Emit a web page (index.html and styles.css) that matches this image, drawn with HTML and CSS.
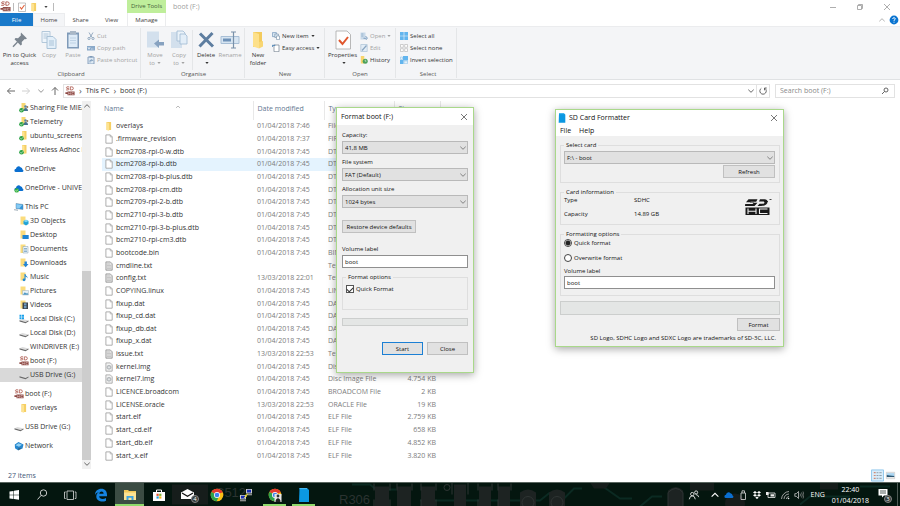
FILE: index.html
```html
<!DOCTYPE html>
<html lang="en">
<head>
<meta charset="utf-8">
<title>boot (F:)</title>
<link rel="stylesheet" href="styles.css">
</head>
<body>
<svg class="sprite" aria-hidden="true">
  <symbol id="doc" viewBox="0 0 8 10"><path d="M.9.9h4.4l1.9 1.9v6.4H.9z" fill="#fff" stroke="#9a9a9a" stroke-width=".8"/><path d="M5.2.9v2h2" fill="none" stroke="#9a9a9a" stroke-width=".6"/></symbol>
  <symbol id="txt" viewBox="0 0 8 10"><path d="M.9.9h4.4l1.9 1.9v6.4H.9z" fill="#e2e2e2" stroke="#909090" stroke-width=".8"/><path d="M2 3h3M2 4.5h4M2 6h4M2 7.5h4" stroke="#aaa" stroke-width=".5"/></symbol>
  <symbol id="img" viewBox="0 0 8 10"><path d="M.9.9h4.4l1.9 1.9v6.4H.9z" fill="#f4f4f4" stroke="#a0a0a0" stroke-width=".8"/><circle cx="4" cy="5.3" r="2" fill="#c9cdd0" stroke="#8f9498" stroke-width=".5"/><circle cx="4" cy="5.3" r=".6" fill="#fff"/></symbol>
  <symbol id="folder" viewBox="0 0 8 10"><path d="M1.5 1h4.6v8H1.5z" fill="#f6cf63"/><path d="M1.5 1.3l2.6 1v7.4L1.5 9z" fill="#fde392"/></symbol>
  <symbol id="bigfolder" viewBox="0 0 14 20"><path d="M2 2h9v15H2z" fill="#f3cb5d"/><path d="M2 2l6 2v14.500l-6-2z" fill="#fde08a"/><path d="M8 12l4-1v5.500l-4 2z" fill="#f8d673"/></symbol>
  <symbol id="shared" viewBox="0 0 10 10"><path d="M2.500 0h4v8h-4z" fill="#f8d873"/><circle cx="6.500" cy="3.500" r="1.300" fill="#5c88a8"/><path d="M4.500 8c0-4 4.500-4 4.500 0z" fill="#46718f"/><circle cx="8.300" cy="4" r="1" fill="#9a7b58"/><circle cx="2.500" cy="7.300" r="2.300" fill="#2ba245"/><path d="M1.300 7.300l.9 1 1.600-1.900" fill="none" stroke="#fff" stroke-width=".6"/></symbol>
  <symbol id="synced" viewBox="0 0 10 10"><path d="M3 0h4.500v8.500H3z" fill="#f5cf63"/><path d="M3 0l2.500 1v8L3 8z" fill="#fde392"/><circle cx="2.500" cy="7.300" r="2.300" fill="#2ba245"/><path d="M1.300 7.300l.9 1 1.600-1.900" fill="none" stroke="#fff" stroke-width=".6"/></symbol>
  <symbol id="cloud" viewBox="0 0 10 10"><path d="M2 8a1.600 1.600 0 0 1 0-3.200A2.500 2.500 0 0 1 6.500 3.300 2.300 2.300 0 0 1 8.500 5.500 1.300 1.300 0 0 1 8.500 8z" fill="#0a6fd0"/></symbol>
  <symbol id="cloudok" viewBox="0 0 10 10"><use href="#cloud"/><circle cx="2.700" cy="7.400" r="2.200" fill="#36b13f"/><path d="M1.600 7.400l.8.9 1.500-1.700" fill="none" stroke="#fff" stroke-width=".6"/></symbol>
  <symbol id="pc" viewBox="0 0 10 10"><path d="M2 1.500l7 1v5l-7-1z" fill="#2f95dc" stroke="#6e8ea3" stroke-width=".5"/><path d="M2.300 2l6 .9-3 3.500-3-.4z" fill="#86caf3"/><path d="M0 7l4 .6v1.400L0 8.300z" fill="#b6c0c8"/></symbol>
  <symbol id="f3d" viewBox="0 0 10 10"><path d="M1.500.5h5v8h-5z" fill="#fbdc7d"/><path d="M4.500 5l2.500-1.300L9.500 5v3L7 9.500 4.500 8z" fill="#1fa3d8"/><path d="M4.500 5L7 6.300 9.500 5 7 3.700z" fill="#7fd6f3"/></symbol>
  <symbol id="fdesk" viewBox="0 0 10 10"><path d="M1.500.5h5v8h-5z" fill="#fbdc7d"/><path d="M3.500 5h6.200v4H3.500z" fill="#1d84d4"/></symbol>
  <symbol id="fdoc" viewBox="0 0 10 10"><path d="M1.500.5h5v8.500h-5z" fill="#fbdc7d"/><path d="M4 2.500h5v6.500H4z" fill="#eef4f8" stroke="#7d9db3" stroke-width=".5"/><path d="M5 4.500h3M5 6h3M5 7.500h3" stroke="#4b87b0" stroke-width=".6"/></symbol>
  <symbol id="fdown" viewBox="0 0 10 10"><path d="M1.500.5h5v8h-5z" fill="#fbdc7d"/><path d="M5.500 3.500h2.400V6h1.600L6.700 9.300 4 6h1.500z" fill="#2384d6"/></symbol>
  <symbol id="fmusic" viewBox="0 0 10 10"><path d="M1.500.5h5v8h-5z" fill="#fbdc7d"/><path d="M6 2v5.500" stroke="#1b87d8" stroke-width="1"/><path d="M6 2c.5 2 3 2 2.500 4.500C8 5 7 4.500 6 4.500z" fill="#1b87d8"/><circle cx="5" cy="7.800" r="1.400" fill="#1b87d8"/></symbol>
  <symbol id="fpic" viewBox="0 0 10 10"><path d="M1.500.5h5v8h-5z" fill="#fbdc7d"/><path d="M3.500 4.500h6V9h-6z" fill="#e8f2f8" stroke="#8ea4b1" stroke-width=".4"/><path d="M3.800 8.700l2-2.500 1.500 1.300 1-.8 1 2z" fill="#4e97c2"/></symbol>
  <symbol id="fvid" viewBox="0 0 10 10"><path d="M1.500.5h5v8h-5z" fill="#fbdc7d"/><path d="M3.500 2.500h5.500V9H3.500z" fill="#3b434b"/><path d="M5 3.200h2.500v2.200H5zM5 6h2.500v2.300H5z" fill="#6f9cc0"/></symbol>
  <symbol id="disk" viewBox="0 0 10 10"><path d="M.5 6.300l3-1.300 6 1.500-3 1.500z" fill="#dcdcdc"/><path d="M.5 6.300l6 1.700v1.300L.5 7.500zM6.500 8l3-1.500v1.100l-3 1.700z" fill="#6a6a6a"/></symbol>
  <symbol id="diskwin" viewBox="0 0 10 10"><use href="#disk"/><path d="M.5.8h2v2h-2zM3 .8h2v2H3zM.5 3.200h2v2h-2zM3 3.200h2v2H3z" fill="#18a0ea"/></symbol>
  <symbol id="sd" viewBox="0 0 12 12"><path d="M5 1H2.300L1.700 2l.5.900h2.100l.4.900-.6.900H1.300M6.400 1v3.700h1.800Q10 4.500 10 2.800 10 1 8.200 1z" fill="none" stroke="#a5483c" stroke-width=".9"/><path d="M.5 7.500h2.500v-1h8.500v4.700H3V9.500H.5z" fill="#8e4a45"/><path d="M4.300 7.500v3M6.500 7.500v3M4.300 9h2.200M10.500 7.800H8.300v2.400h2.200" fill="none" stroke="#e6cfcc" stroke-width=".6"/></symbol>
  <symbol id="net" viewBox="0 0 10 10"><path d="M.8 3.500L4.500 1l5 2.500-1 4-4.500 1.700-3-2z" fill="#2687ce"/><path d="M1.500 4.200l3-2 3.500 1.600-3 2z" fill="#8fd0f5"/><path d="M4 9.500l.5-3 3 1z" fill="#31658c"/></symbol>
  <symbol id="chev" viewBox="0 0 8 8"><path d="M1.300 2.700L4 5.300l2.700-2.600" fill="none" stroke="currentColor" stroke-width=".9"/></symbol>
  <symbol id="up" viewBox="0 0 8 8"><path d="M1.300 5.300L4 2.700l2.700 2.600" fill="none" stroke="currentColor" stroke-width=".9"/></symbol>
  <symbol id="tri" viewBox="0 0 4 4"><path d="M.4 1h3.200L2 3z" fill="currentColor"/></symbol>
  <symbol id="x" viewBox="0 0 8 8"><path d="M1 1l6 6M7 1L1 7" stroke="currentColor" stroke-width=".8"/></symbol>
  <symbol id="bluecard" viewBox="0 0 12 14"><path d="M1.500 0H9l2 2v12H1z" fill="#0b98e2"/><path d="M1.500 0H9v1.200H1.500z" fill="#46b7f0"/></symbol>
  <symbol id="chrome" viewBox="0 0 14 14"><circle cx="7" cy="7" r="6.300" fill="#fbc116"/><path d="M7 7L1.500 3.900A6.300 6.300 0 0 1 12.500 4z" fill="#e33b2e"/><path d="M1.500 3.900A6.300 6.300 0 0 0 6.600 13.300L9 8.500 7 7z" fill="#2fa24c"/><path d="M7 4h5.500" stroke="#e33b2e"/><circle cx="7" cy="7" r="3" fill="#fff"/><circle cx="7" cy="7" r="2.300" fill="#3f82ee"/></symbol>
</svg>

<main class="explorer">
  <header class="titlebar">
    <div class="quick">
      <svg class="i12"><use href="#sd"/></svg><i class="bar"></i>
      <svg class="i10" viewBox="0 0 10 10"><path d="M1.500 1h7v8.500h-7z" fill="#fff" stroke="#9b9b9b" stroke-width=".6"/><path d="M3 5l1.500 2L7.500 3" fill="none" stroke="#e2613a" stroke-width="1.100"/></svg>
      <svg class="i10"><use href="#folder"/></svg>
      <svg class="i4"><use href="#tri"/></svg><i class="bar"></i>
    </div>
    <div class="context">Drive Tools</div>
    <h1>boot (F:)</h1>
    <div class="winbtns">
      <button aria-label="Minimise"><svg class="i8" viewBox="0 0 8 8"><path d="M1 4.500h6" stroke="currentColor" stroke-width=".8"/></svg></button>
      <button aria-label="Restore"><svg class="i8" viewBox="0 0 8 8"><path d="M1.500 2.500h4v4h-4zM2.500 2.500v-1h4v4h-1" fill="none" stroke="currentColor" stroke-width=".8"/></svg></button>
      <button aria-label="Close"><svg class="i8"><use href="#x"/></svg></button>
    </div>
  </header>
  <nav class="tabs">
    <button class="file">File</button><button class="home">Home</button><button>Share</button><button>View</button><button class="manage">Manage</button>
    <span class="help"><svg class="i8"><use href="#up"/></svg><svg class="i10" viewBox="0 0 10 10"><circle cx="5" cy="5" r="4.400" fill="#0a74d1"/><path d="M3.700 4Q3.700 2.700 5 2.700T6.300 3.900Q6.300 4.600 5 5.300V6M5 6.700v1" fill="none" stroke="#fff" stroke-width=".9"/></svg></span>
  </nav>

  <section class="ribbon">
    <div class="group g-clip">
      <div class="tools">
        <button class="big wide"><svg viewBox="0 0 20 20"><path d="M11 2.500l6 6-1.500.8-.8-.3-3 3 .2 2.500-1.200 1L4.500 9.300l1-1.200 2.500.2 3-3-.3-.9z" fill="#7b858f"/><path d="M7.500 12L3 16.800" stroke="#7b858f" stroke-width="1.300"/></svg>Pin to Quick<br>access</button>
        <button class="big off mid"><svg viewBox="0 0 20 20"><path d="M3 1.500h8v11H3z" fill="#eef5fb" stroke="#b3c8da"/><path d="M4.500 4h5M4.500 6h5M4.500 8h5" stroke="#b3c8da"/><path d="M8 6.500h6l3 3v9H8z" fill="#e3eff9" stroke="#a9c2d7"/><path d="M10 11h5M10 13h5M10 15h5" stroke="#a9c2d7"/></svg>Copy</button>
        <button class="big off mid"><svg viewBox="0 0 20 20"><path d="M4 2.500h12v16H4z" fill="#7f9ab8"/><path d="M5.500 4.500h9v12.500h-9z" fill="#deebf7"/><path d="M7 1h6v3.500H7z" fill="#a9b7c6"/><path d="M7 8h6M7 10.500h6M7 13h6" stroke="#b6cbe0" stroke-width=".8"/></svg>Paste</button>
        <div class="list off">
          <button><svg viewBox="0 0 8 8"><path d="M2 .5l3 5M6 .5l-3 5" stroke="#7f99b4" stroke-width=".8"/><circle cx="2" cy="6.500" r="1.100" fill="none" stroke="#7f99b4" stroke-width=".8"/><circle cx="6" cy="6.500" r="1.100" fill="none" stroke="#7f99b4" stroke-width=".8"/></svg>Cut</button>
          <button><svg viewBox="0 0 8 8"><path d="M0 2h8v4.500H0z" fill="#8aa9c9"/><path d="M1 3.200l1 2 1-2M4 5h.8M5.500 5h.8" stroke="#fff" stroke-width=".7" fill="none"/></svg>Copy path</button>
          <button><svg viewBox="0 0 8 8"><path d="M1 1h6v7H1z" fill="#dfeaf4" stroke="#7f9ab8" stroke-width=".9"/><path d="M2.500 0h3v1.500h-3z" fill="#7f9ab8"/><path d="M3 6.500V4.300h2.300M4.500 3.300l1 1-1 1" stroke="#5c83ab" stroke-width=".7" fill="none"/></svg>Paste shortcut</button>
        </div>
      </div><h2>Clipboard</h2>
    </div>
    <div class="group g-org">
      <div class="tools">
        <button class="big off mid"><svg viewBox="0 0 20 20"><path d="M2 1.500h12v16H2z" fill="#d3e0ed"/><path d="M9 13.500l5-4v2.500h5v3.500h-5V18z" fill="#87a2c0"/></svg>Move<br>to<svg class="i4"><use href="#tri"/></svg></button>
        <button class="big off mid"><svg viewBox="0 0 20 20"><path d="M2 2h11v16H2z" fill="#d3e0ed"/><path d="M8 1h6l2 2v8H8z" fill="#eaf2f9" stroke="#9fb9d2" stroke-width=".8"/><path d="M11 4h5l2 2v8h-7z" fill="#e3eef8" stroke="#9fb9d2" stroke-width=".8"/></svg>Copy<br>to<svg class="i4"><use href="#tri"/></svg></button>
        <i class="sep"></i>
        <button class="big mid"><svg viewBox="0 0 20 20"><path d="M4 3.500l13 13M16.500 3L3.500 16.500" stroke="#5e7ea0" stroke-width="3"/></svg>Delete<br><svg class="i4"><use href="#tri"/></svg></button>
        <button class="big off mid"><svg viewBox="0 0 20 20"><path d="M1 6.500h18v7H1z" fill="#d7e5f2" stroke="#a8bfd6"/><path d="M3 8.500h8v3H3z" fill="#6f92b8"/><path d="M11 2h5M11 18h5M13.500 2v16" stroke="#7890a9" stroke-width="1.200"/></svg>Rename</button>
      </div><h2>Organise</h2>
    </div>
    <div class="group g-new">
      <div class="tools">
        <button class="big mid"><svg><use href="#bigfolder"/></svg>New<br>folder</button>
        <div class="list">
          <button><svg viewBox="0 0 8 8"><path d="M.4.600h4v4h-4z" fill="#d9e8f4" stroke="#6f92b8" stroke-width=".7"/><path d="M2.800 2h3.600v3.500H2.800z" fill="#d9e8f4" stroke="#8299af" stroke-width=".7"/><path d="M4.500 4h3v3.600h-3z" fill="#fff" stroke="#8299af" stroke-width=".7"/></svg>New item<svg class="i4"><use href="#tri"/></svg></button>
          <button><svg viewBox="0 0 8 8"><path d="M2 1h5v6.700H2z" fill="#fff" stroke="#71808e" stroke-width=".7"/><path d="M.3 3V1.300h3" fill="none" stroke="#4c82b5" stroke-width="1"/></svg>Easy access<svg class="i4"><use href="#tri"/></svg></button>
        </div>
      </div><h2>New</h2>
    </div>
    <div class="group g-open">
      <div class="tools">
        <button class="big wide"><svg viewBox="0 0 20 20"><path d="M3 1h11l3.500 3.500V19H3z" fill="#fdfdfd" stroke="#a7a7a7" stroke-width=".8"/><path d="M6 10l3.500 4L15 7" fill="none" stroke="#e0562c" stroke-width="2"/></svg>Properties<br><svg class="i4"><use href="#tri"/></svg></button>
        <div class="list">
          <button class="off"><svg viewBox="0 0 8 8"><path d="M.5.500h5v7h-5z" fill="#c8d9e9"/><path d="M1.300 2h2M1.300 4h2" stroke="#83a3c3" stroke-width=".7"/><path d="M3.500 6.300h3M5.500 4l2 2.300-2 1.700" fill="none" stroke="#7d9fc1"/></svg>Open<svg class="i4"><use href="#tri"/></svg></button>
          <button class="off"><svg viewBox="0 0 8 8"><path d="M.8.500h6.400v7H.8z" fill="#e2edf6" stroke="#aac1d6" stroke-width=".7"/><path d="M2 6.500L6.500 1.500" stroke="#89a5c1" stroke-width="1.200"/></svg>Edit</button>
          <button><svg viewBox="0 0 8 8"><path d="M.8 0h3.500v7.500H.8z" fill="#f8d56c"/><circle cx="5.200" cy="5.200" r="2.500" fill="#4ba05a"/><path d="M5.200 3.700v1.500h1.200" fill="none" stroke="#fff" stroke-width=".6"/></svg>History</button>
        </div>
      </div><h2>Open</h2>
    </div>
    <div class="group g-sel">
      <div class="tools">
        <div class="list">
          <button><svg viewBox="0 0 8 8"><path d="M0 0h3.700v3.700H0zM4.300 0H8v3.700H4.300zM0 4.300h3.700V8H0zM4.300 4.300H8V8H4.300z" fill="#62b5ee"/></svg>Select all</button>
          <button><svg viewBox="0 0 8 8"><path d="M.5.500h2.800v2.800H.5zM4.700.500h2.800v2.800H4.700zM.5 4.700h2.800v2.800H.5zM4.700 4.700h2.800v2.800H4.700z" fill="#fff" stroke="#b0b0b0" stroke-width=".6"/></svg>Select none</button>
          <button><svg viewBox="0 0 8 8"><path d="M3 0h5v4.500H3z" fill="#62b5ee"/><path d="M.5 1h2v2.500h-2zM4 5h3.500v2.700H4z" fill="#e6f2fb" stroke="#8fc3e8" stroke-width=".6"/><path d="M0 4h3.500v4H0z" fill="#62b5ee"/></svg>Invert selection</button>
        </div>
      </div><h2>Select</h2>
    </div>
  </section>

  <section class="address">
    <div class="arrows">
      <svg class="i10" viewBox="0 0 10 10"><path d="M9 5H1.500M4.500 2l-3 3 3 3" fill="none" stroke="#666"/></svg>
      <svg class="i10" viewBox="0 0 10 10"><path d="M1 5h7.500M5.500 2l3 3-3 3" fill="none" stroke="#d0d0d0"/></svg>
      <svg class="i8"><use href="#chev"/></svg>
      <svg class="i10" viewBox="0 0 10 10"><path d="M5 9V1.500M2 4.500l3-3 3 3" fill="none" stroke="#666"/></svg>
    </div>
    <div class="path"><svg class="i10"><use href="#sd"/></svg><b>›</b><a href="#pc">This PC</a><b>›</b><a href="#boot">boot (F:)</a><svg class="i8 end"><use href="#chev"/></svg><i></i><svg class="i10" viewBox="0 0 10 10"><path d="M3.300 2.300A3.200 3.200 0 1 0 6.800 2.300M6.500 4.300v-2.300h2.200" fill="none" stroke="#555" stroke-width=".9"/></svg></div>
    <div class="search"><input aria-label="Search" placeholder="Search boot (F:)"><svg class="i8" viewBox="0 0 8 8"><circle cx="5" cy="3" r="2" fill="none" stroke="#555" stroke-width=".9"/><path d="M3.600 4.400L1 7" stroke="#555" stroke-width=".9"/></svg></div>
  </section>

  <section class="content">
    <nav class="tree">
      <ul>
        <li class="sub"><svg><use href="#shared"/></svg>Sharing File MIEAI</li>
        <li class="sub"><svg><use href="#shared"/></svg>Telemetry</li>
        <li class="sub"><svg><use href="#synced"/></svg>ubuntu_screenshot</li>
        <li class="sub"><svg><use href="#synced"/></svg>Wireless Adhoc N</li>
      </ul>
      <ul><li><svg><use href="#cloud"/></svg>OneDrive</li></ul>
      <ul><li><svg><use href="#cloudok"/></svg>OneDrive - UNIVE</li></ul>
      <ul>
        <li><svg><use href="#pc"/></svg>This PC</li>
        <li class="sub"><svg><use href="#f3d"/></svg>3D Objects</li>
        <li class="sub"><svg><use href="#fdesk"/></svg>Desktop</li>
        <li class="sub"><svg><use href="#fdoc"/></svg>Documents</li>
        <li class="sub"><svg><use href="#fdown"/></svg>Downloads</li>
        <li class="sub"><svg><use href="#fmusic"/></svg>Music</li>
        <li class="sub"><svg><use href="#fpic"/></svg>Pictures</li>
        <li class="sub"><svg><use href="#fvid"/></svg>Videos</li>
        <li class="sub"><svg><use href="#diskwin"/></svg>Local Disk (C:)</li>
        <li class="sub"><svg><use href="#disk"/></svg>Local Disk (D:)</li>
        <li class="sub"><svg><use href="#disk"/></svg>WINDRIVER (E:)</li>
        <li class="sub"><svg><use href="#sd"/></svg>boot (F:)</li>
        <li class="sub current"><svg><use href="#disk"/></svg>USB Drive (G:)</li>
      </ul>
      <ul>
        <li><svg><use href="#sd"/></svg>boot (F:)</li>
        <li class="sub"><svg><use href="#folder"/></svg>overlays</li>
      </ul>
      <ul><li><svg><use href="#disk"/></svg>USB Drive (G:)</li></ul>
      <ul><li><svg><use href="#net"/></svg>Network</li></ul>
    </nav>
    <div class="scroll"><svg class="i8"><use href="#up"/></svg><div class="track"><div class="thumb"></div></div><svg class="i8"><use href="#chev"/></svg></div>
    <div class="files">
      <table>
        <colgroup><col class="c-name"><col class="c-date"><col class="c-type"><col class="c-size"></colgroup>
        <thead><tr><th>Name<svg class="i8 sort"><use href="#up"/></svg></th><th>Date modified</th><th>Type</th><th>Size</th></tr></thead>
        <tbody>
          <tr><td><svg><use href="#folder"/></svg>overlays</td><td>01/04/2018 7:46</td><td>File folder</td><td></td></tr>
          <tr><td><svg><use href="#doc"/></svg>.firmware_revision</td><td>01/04/2018 7:37</td><td>FIRMWARE_REVI...</td><td></td></tr>
          <tr><td><svg><use href="#doc"/></svg>bcm2708-rpi-0-w.dtb</td><td>01/04/2018 7:45</td><td>DTB File</td><td></td></tr>
          <tr class="hover"><td><svg><use href="#doc"/></svg>bcm2708-rpi-b.dtb</td><td>01/04/2018 7:45</td><td>DTB File</td><td></td></tr>
          <tr><td><svg><use href="#doc"/></svg>bcm2708-rpi-b-plus.dtb</td><td>01/04/2018 7:45</td><td>DTB File</td><td></td></tr>
          <tr><td><svg><use href="#doc"/></svg>bcm2708-rpi-cm.dtb</td><td>01/04/2018 7:45</td><td>DTB File</td><td></td></tr>
          <tr><td><svg><use href="#doc"/></svg>bcm2709-rpi-2-b.dtb</td><td>01/04/2018 7:45</td><td>DTB File</td><td></td></tr>
          <tr><td><svg><use href="#doc"/></svg>bcm2710-rpi-3-b.dtb</td><td>01/04/2018 7:45</td><td>DTB File</td><td></td></tr>
          <tr><td><svg><use href="#doc"/></svg>bcm2710-rpi-3-b-plus.dtb</td><td>01/04/2018 7:45</td><td>DTB File</td><td></td></tr>
          <tr><td><svg><use href="#doc"/></svg>bcm2710-rpi-cm3.dtb</td><td>01/04/2018 7:45</td><td>DTB File</td><td></td></tr>
          <tr><td><svg><use href="#doc"/></svg>bootcode.bin</td><td>01/04/2018 7:45</td><td>BIN File</td><td></td></tr>
          <tr><td><svg><use href="#txt"/></svg>cmdline.txt</td><td></td><td>Text Document</td><td></td></tr>
          <tr><td><svg><use href="#txt"/></svg>config.txt</td><td>13/03/2018 22:01</td><td>Text Document</td><td></td></tr>
          <tr><td><svg><use href="#doc"/></svg>COPYING.linux</td><td>01/04/2018 7:45</td><td>LINUX File</td><td></td></tr>
          <tr><td><svg><use href="#doc"/></svg>fixup.dat</td><td>01/04/2018 7:45</td><td>DAT File</td><td></td></tr>
          <tr><td><svg><use href="#doc"/></svg>fixup_cd.dat</td><td>01/04/2018 7:45</td><td>DAT File</td><td></td></tr>
          <tr><td><svg><use href="#doc"/></svg>fixup_db.dat</td><td>01/04/2018 7:45</td><td>DAT File</td><td></td></tr>
          <tr><td><svg><use href="#doc"/></svg>fixup_x.dat</td><td>01/04/2018 7:45</td><td>DAT File</td><td></td></tr>
          <tr><td><svg><use href="#txt"/></svg>issue.txt</td><td>13/03/2018 22:53</td><td>Text Document</td><td></td></tr>
          <tr><td><svg><use href="#img"/></svg>kernel.img</td><td>01/04/2018 7:45</td><td>Disc Image File</td><td></td></tr>
          <tr><td><svg><use href="#img"/></svg>kernel7.img</td><td>01/04/2018 7:45</td><td>Disc Image File</td><td>4.754 KB</td></tr>
          <tr><td><svg><use href="#doc"/></svg>LICENCE.broadcom</td><td>01/04/2018 7:45</td><td>BROADCOM File</td><td>2 KB</td></tr>
          <tr><td><svg><use href="#doc"/></svg>LICENSE.oracle</td><td>13/03/2018 22:53</td><td>ORACLE File</td><td>19 KB</td></tr>
          <tr><td><svg><use href="#doc"/></svg>start.elf</td><td>01/04/2018 7:45</td><td>ELF File</td><td>2.759 KB</td></tr>
          <tr><td><svg><use href="#doc"/></svg>start_cd.elf</td><td>01/04/2018 7:45</td><td>ELF File</td><td>658 KB</td></tr>
          <tr><td><svg><use href="#doc"/></svg>start_db.elf</td><td>01/04/2018 7:45</td><td>ELF File</td><td>4.852 KB</td></tr>
          <tr><td><svg><use href="#doc"/></svg>start_x.elf</td><td>01/04/2018 7:45</td><td>ELF File</td><td>3.820 KB</td></tr>
        </tbody>
      </table>
    </div>
  </section>
  <footer class="status"><span>27 items</span>
    <div class="views">
      <svg viewBox="0 0 14 13"><path d="M.5.500h13v12H.5z" fill="#d8ecfa" stroke="#8cc6ec"/><path d="M3 3.500h2M3 6.500h2M3 9.500h2" stroke="#d08a76" stroke-width="1.300"/><path d="M6 3.500h2M9 3.500h2.500M6 6.500h2M9 6.500h2.500M6 9.500h2M9 9.500h2.500" stroke="#8b98a3"/></svg>
      <svg viewBox="0 0 14 13"><path d="M2.500 3h9v7h-9z" fill="#e6e6e6" stroke="#c4c4c4" stroke-width=".6"/><path d="M3 4h8v4H3z" fill="#a9d5f2"/><path d="M3 8V6l3 .500L11 7v1z" fill="#2d5570"/></svg>
    </div>
  </footer>
</main>

<section class="window format">
  <header><h3>Format boot (F:)</h3><button class="x" aria-label="Close window"><svg class="i8"><use href="#x"/></svg></button></header>
  <form class="body">
    <label for="cap">Capacity:</label>
    <div class="pick"><select id="cap"><option>41,8 MB</option></select><svg class="i8"><use href="#chev"/></svg></div>
    <label for="fs">File system</label>
    <div class="pick"><select id="fs"><option>FAT (Default)</option></select><svg class="i8"><use href="#chev"/></svg></div>
    <label for="au">Allocation unit size</label>
    <div class="pick"><select id="au"><option>1024 bytes</option></select><svg class="i8"><use href="#chev"/></svg></div>
    <button type="button" class="btn restore">Restore device defaults</button>
    <label for="vol">Volume label</label>
    <input id="vol" class="text" value="boot">
    <fieldset><legend>Format options</legend><label class="check"><input type="checkbox" checked>Quick Format</label></fieldset>
    <div class="progress"></div>
    <div class="actions"><button type="button" class="btn primary">Start</button><button type="button" class="btn">Close</button></div>
  </form>
</section>

<section class="window sdcard">
  <header><svg class="card"><use href="#bluecard"/></svg><h3>SD Card Formatter</h3><button class="x" aria-label="Close window"><svg class="i8"><use href="#x"/></svg></button></header>
  <nav class="menu"><button>File</button><button>Help</button></nav>
  <form class="body">
    <fieldset class="f-select"><legend>Select card</legend>
      <div class="pick"><select aria-label="Select card"><option>F:\ - boot</option></select><svg class="i8"><use href="#chev"/></svg></div>
      <button type="button" class="btn">Refresh</button>
    </fieldset>
    <fieldset class="f-info"><legend>Card information</legend>
      <dl><dt>Type</dt><dd>SDHC</dd><dt>Capacity</dt><dd>14.89 GB</dd></dl>
      <svg class="logo" viewBox="0 0 28 18"><path d="M12.500 1.200H3.500L1 4.300h8.200L7.500 6H.2L0 8h9.500l3-3.200H5l.6-1h5.600zM15 1.200h4.500c5 0 4 6.800-3.500 6.800h-3.500l2-2.200h3c2.300 0 2.600-2.400.6-2.400H14z" fill="#1a1a1a"/><path d="M19 3.500h4M24.500 1.500h2" stroke="#1a1a1a" stroke-width=".8"/><path d="M.5 9.500h24v7.500H.5z" fill="#1a1a1a"/><path d="M3 10.500v5.500M11 10.500v5.500M3 13.200h8M22.500 11h-8v4.500h8" fill="none" stroke="#f0f0f0" stroke-width="1.100"/></svg>
    </fieldset>
    <fieldset class="f-opt"><legend>Formatting options</legend>
      <label class="radio"><input type="radio" name="mode" checked>Quick format</label>
      <label class="radio"><input type="radio" name="mode">Overwrite format</label>
      <label for="vol2">Volume label</label>
      <input id="vol2" class="text" value="boot">
    </fieldset>
    <div class="progress"></div>
    <button type="button" class="btn go">Format</button>
    <p>SD Logo, SDHC Logo and SDXC Logo are trademarks of SD-3C, LLC.</p>
  </form>
</section>

<footer class="taskbar">
  <svg class="pcb" viewBox="0 0 900 24" preserveAspectRatio="xMidYMid slice" aria-hidden="true">
    <g fill="none" stroke="#0b2a22" stroke-width="2"><path d="M352 2h18l6 5h20M420 18h120l10-8M560 20l14-14h8M600 2l20 14h12M640 24l12-10h10M860 4h30M800 22l10-8h40"/></g>
    <g fill="#1d2322"><path d="M375 4h14v20h-14zM397 4h14v20h-14zM421 4h14v20h-14zM454 2h12v22h-12zM479 4h12v20h-12zM498 4h12v20h-12zM520 10q8-6 16 0v14h-16zM549 10q8-6 16 0v14h-16zM668 8q8-7 15 0v16h-15z"/></g>
    <g stroke="#2f3534" stroke-width="1" fill="none"><path d="M374 1v7M390 1v7M397 1v7M412 1v7M421 1v7M436 1v7M452 0v12M468 0v12M478 1v7M492 1v7M498 1v7M511 1v7M374 17v7M390 17v7M421 17v7M436 17v7M478 17v7M498 17v7M668 24V10q8-8 15 0v14"/><circle cx="447" cy="5" r="3"/><circle cx="528" cy="20" r="6"/><circle cx="557" cy="20" r="6"/></g>
    <g fill="#161d1b"><path d="M172 2h36v20h-36zM590 0h20l-4 6h-12zM690 0h24v8h-24zM820 0h18v7h-18z"/><circle cx="735" cy="21" r="10"/></g>
    <g class="silk"><text x="339" y="21">R306</text><text x="215" y="14">C512</text></g>
  </svg>
  <div class="launch start">
    <button aria-label="Start"><svg viewBox="0 0 14 14"><path d="M2.500 3.500l4-.600v3.800h-4zM7 2.800l5-.7v4.600H7zM2.500 7.200h4V11l-4-.600zM7 7.200h5v4.600l-5-.7z" fill="#fff"/></svg></button>
    <button aria-label="Search"><svg viewBox="0 0 14 14"><circle cx="8.500" cy="5" r="3.200" fill="none" stroke="#ddd" stroke-width=".9"/><path d="M6.200 7.300L2.500 11.500" stroke="#ddd" stroke-width=".9"/></svg></button>
    <button aria-label="Task view"><svg viewBox="0 0 14 14"><path d="M4 3h6.500v8.500H4zM2.700 4H1.500v6.500h1.200M11.800 4H13v6.500h-1.200" fill="none" stroke="#ddd" stroke-width=".8"/></svg></button>
  </div>
  <div class="launch apps">
    <button aria-label="Edge"><svg viewBox="0 0 14 14"><path d="M1 7C1 3 4 .8 7.300.8c3.700 0 5.700 2.600 5.700 6v1.400H5.200c.2 3 3.800 3.400 6.800 1.800v2.700C8 14.800 2.300 13 2.300 8.500c0-2 1-3.400 2.900-4.400C3.300 4.500 1.700 5.500 1 7zm4.300-1.200h4.300C9.600 2.800 5.500 3 5.300 5.800z" fill="#1583e0"/></svg></button>
    <button class="open active" aria-label="File Explorer"><svg viewBox="0 0 14 14"><path d="M1 2h4l1 1h7v9H1z" fill="#f3c95a"/><path d="M1 4.500h12v7.500H1z" fill="#fde393"/><path d="M3.500 12V8h7v4H8.500V9.800h-3V12z" fill="#3fa3df"/></svg></button>
    <button aria-label="Store"><svg viewBox="0 0 14 14"><path d="M1 4h12v9H1z" fill="#fff"/><path d="M4.500 4V2h5v2" fill="none" stroke="#fff"/><path d="M4.500 5.700h2.200v2.200H4.500z" fill="#e8502b"/><path d="M7.200 5.700h2.200v2.200H7.200z" fill="#7db72f"/><path d="M4.500 8.400h2.200v2.200H4.500z" fill="#24a0e2"/><path d="M7.200 8.400h2.200v2.200H7.200z" fill="#f5b81c"/></svg></button>
    <button aria-label="Mail, 4 unread"><svg viewBox="0 0 14 14"><path d="M0 4.500L6.500 1 13 4.500V11H0z" fill="#fff"/><path d="M1 5l5.500 3.200L12 5" fill="none" stroke="#111" stroke-width="1.200"/></svg><span class="badge">4</span></button>
    <button aria-label="Chrome"><svg><use href="#chrome"/></svg></button>
    <button aria-label="PuTTY"><svg viewBox="0 0 14 14"><path d="M7 1h6v4.500H7zM1 7h6v4.500H1z" fill="#c9c9c9"/><path d="M8 1.800h4v2.800H8zM2 7.800h4v2.800H2z" fill="#1930b8"/><path d="M8 6.200h5v1H8zM1 12.200h6v1H1z" fill="#b5b5b5"/><path d="M9 6L6 7.500l2 .300-3 2" fill="none" stroke="#f3e13a" stroke-width=".9"/></svg></button>
    <button class="open" aria-label="Chrome profile"><svg viewBox="0 0 14 14"><use href="#chrome"/><path d="M6.500 6h7v8h-7z" fill="#e6e6e6"/><circle cx="10" cy="8" r="1.400" fill="#333"/><path d="M7.500 14c0-5 5-5 5 0z" fill="#222"/></svg></button>
    <button class="open" aria-label="SD Card Formatter"><svg><use href="#bluecard"/></svg></button>
  </div>
  <div class="tray">
    <svg class="t14" viewBox="0 0 14 14"><circle cx="5" cy="6" r="2" fill="none" stroke="#eee"/><circle cx="9.500" cy="4" r="1.800" fill="none" stroke="#eee"/><path d="M1.500 12q.5-4 3.500-4t3.500 4M9 6.500q3 0 3.500 3" fill="none" stroke="#eee"/></svg>
    <svg class="t10 gap" viewBox="0 0 8 8"><use href="#up"/></svg>
    <svg class="t10" viewBox="0 0 10 10"><use href="#cloud"/></svg>
    <svg class="t10" viewBox="0 0 10 10"><path d="M3 3h4.500v6.500H3zM4 3V.8h2.500V3" fill="none" stroke="#ddd" stroke-width=".8"/></svg>
    <svg class="t10" viewBox="0 0 10 10"><path d="M3 1l2 1.400L3 3.800 1 2.400zM7 1l2 1.400-2 1.400-2-1.400zM3 3.900l2 1.400-2 1.400-2-1.400zM7 3.900l2 1.400-2 1.400-2-1.400zM5 6.500l1.700 1.200L5 9 3.300 7.700z" fill="#fff"/></svg>
    <svg class="t10" viewBox="0 0 10 10"><path d="M2 3h7v4.500H2z" fill="none" stroke="#eee" stroke-width=".8"/><path d="M4.500 4.200H8v2.200H4.500zM0 2h2.500v3H0z" fill="#eee"/></svg>
    <svg class="t10" viewBox="0 0 10 10"><path d="M1.500 9A8 8 0 0 1 9 1.500M4 9a5.500 5.500 0 0 1 5-5M6.300 9A3 3 0 0 1 9 6.500" fill="none" stroke="#aaa" stroke-width=".9"/><circle cx="8.500" cy="8.500" r=".8" fill="#eee"/></svg>
    <svg class="t10" viewBox="0 0 10 10"><path d="M.8 3.700h1.500L4.500 1.500v7L2.300 6.300H.8z" fill="none" stroke="#ddd" stroke-width=".7"/><path d="M6 3.500q1 1.500 0 3M7.500 2.500q1.600 2.500 0 5M9 1.500q2 3.500 0 7" fill="none" stroke="#aaa" stroke-width=".6"/></svg>
    <span class="lang">ENG</span>
    <time>22:40<br>01/04/2018</time>
    <div class="notif"><svg class="t10" viewBox="0 0 10 10"><path d="M.5 1h9v6.500H6L4 9.500v-2H.5z" fill="#fff"/><path d="M2 3h6M2 5h6" stroke="#0a1a15" stroke-width=".7"/></svg><span class="badge">3</span></div>
  </div>
</footer>
</body>
</html>
```
FILE: styles.css
```css
* { box-sizing: border-box; }
body {
  margin: 0;
  height: 100vh;
  display: flex;
  flex-direction: column;
  overflow: hidden;
  font: 7px/10px "Open Sans", "Noto Sans", sans-serif;
  color: #333;
  background: #fff;
}
h1, h2, h3, p, ul, dl, dd { margin: 0; padding: 0; font-size: inherit; font-weight: 400; }
ul { list-style: none; }
button, input, select { font: inherit; color: inherit; margin: 0; padding: 0; border: 0; background: none; border-radius: 0; }
a { color: inherit; text-decoration: none; }
svg { flex: none; }
.sprite { position: absolute; width: 0; height: 0; }
.i4 { width: 4px; height: 4px; }
.i8 { width: 8px; height: 8px; }
.i10 { width: 10px; height: 10px; }
.i12 { width: 11px; height: 11px; }

.explorer { flex: 1; min-height: 0; display: flex; flex-direction: column; }

/* Title bar and tabs */
.titlebar { display: flex; height: 13px; align-items: center; }
.quick { width: 127px; display: flex; align-items: center; gap: 2px; }
.quick .i4 { margin: 0 3px; color: #444; }
.bar { width: 1px; height: 8px; background: #bbb; margin-right: 1px; }
.context { width: 39px; height: 13px; background: #bfee9b; color: #45623a; text-align: center; font-size: 6px; line-height: 13px; }
.titlebar h1 { flex: 1; padding-left: 7px; color: #a0a0a0; }
.winbtns { display: flex; color: #999; }
.winbtns button { width: 27px; height: 13px; display: grid; place-items: center; }
.tabs { display: flex; height: 13px; padding-right: 1px; font-size: 6px; color: #444; }
.tabs button { width: 31px; }
.tabs .file { width: 33px; background: #1979ca; color: #fff; }
.tabs .home { width: 32px; background: #f4f5f7; border: 1px solid #ebecee; border-bottom: 0; }
.tabs .manage { width: 39px; border: 1px solid #ebecee; border-width: 0 1px; }
.help { margin-left: auto; display: flex; gap: 3px; align-items: center; color: #aaa; }

/* Ribbon */
.ribbon { display: flex; height: 54px; background: #f4f5f7; border-top: 1px solid #ebecee; border-bottom: 1px solid #e0e2e4; font-size: 6px; line-height: 8px; color: #333; }
.group { display: flex; flex-direction: column; border-right: 1px solid #e4e6e8; margin: 1px 0; }
.tools { display: flex; flex: 1; padding-top: 2px; }
.group h2 { text-align: center; line-height: 8px; color: #555; }
.g-clip { width: 141px; padding-left: 2px; }
.g-org { width: 104px; padding-left: 2px; }
.g-new { width: 80px; padding-left: 1px; }
.g-open { width: 71px; }
.g-sel { width: 61px; padding-left: 4px; }
.big { display: flow-root; text-align: center; white-space: nowrap; align-self: flex-start; }
.big > svg:first-child { display: block; width: 20px; height: 20px; margin: 0 auto 1px; }
.mid { width: 24px; }
.wide { width: 35px; }
.big .i4 { margin-left: 2px; }
.sep { width: 1px; margin: 0 1px; background: #e4e6e8; }
.off { color: #a3a3a3; }
.list { display: flex; flex-direction: column; }
.list button { display: flex; align-items: center; gap: 2px; height: 12px; white-space: nowrap; }
.list button > svg:first-child { width: 8px; height: 8px; }
.g-clip .list, .g-new .list { padding-left: 2px; }

/* Address row */
.address { display: flex; align-items: center; height: 21px; padding: 3px 5px; }
.arrows { display: flex; align-items: center; justify-content: space-between; width: 55px; margin-right: 3px; padding-left: 1px; color: #888; }
.path { flex: 1; display: flex; align-items: center; gap: 4px; height: 14px; border: 1px solid #e2e2e2; padding: 0 1px; margin-right: 5px; color: #555; }
.path b { font-weight: 400; font-size: 9px; }
.path a { white-space: nowrap; color: #333; }
.path .end { margin-left: auto; margin-right: -3px; }
.path i { width: 1px; align-self: stretch; background: #e2e2e2; margin-right: -3px; }
.search { width: 120px; height: 14px; display: flex; align-items: center; border: 1px solid #e2e2e2; padding: 0 5px 0 4px; }
.search input { flex: 1; min-width: 0; outline: 0; }
.search input::placeholder { color: #8a8a8a; opacity: 1; }

/* Navigation tree */
.content { flex: 1; min-height: 0; display: flex; }
.tree { width: 82px; overflow: hidden; line-height: 14px; }
.tree ul { margin-bottom: 5px; }
.tree li { display: flex; align-items: center; gap: 1px; height: 14px; padding-left: 14px; white-space: nowrap; }
.tree li.sub { padding-left: 19px; }
.tree svg { width: 10px; height: 10px; }
.tree .current { background: #d9d9d9; }
.scroll { width: 9px; background: #f0f0f0; display: flex; flex-direction: column; align-items: center; color: #555; padding: 1px 0; }
.track { flex: 1; width: 100%; display: flex; flex-direction: column; justify-content: flex-end; }
.thumb { height: 54%; background: #cdcdcd; }

/* File list */
.files { flex: 1; padding: 0 0 7px 11px; }
table { height: 100%; width: 338px; table-layout: fixed; border-collapse: collapse; }
.c-name { width: 151px; }
.c-date { width: 71px; }
.c-type { width: 70px; }
.c-size { width: 46px; }
thead tr { height: 19px; }
th { height: 19px; padding: 0 0 4px 4px; text-align: left; font-weight: 400; color: #5f7690; border-right: 1px solid #e8e8e8; background-clip: padding-box; }
th:first-child { padding-left: 2px; }
.sort { float: right; margin-right: 71px; height: 6px; color: #999; }
td { padding: 0 0 0 4px; color: #7c7c7c; white-space: nowrap; overflow: hidden; line-height: 10px; }
td:first-child { color: #333; padding-left: 3px; }
td:last-child { text-align: right; padding-right: 4px; }
td svg { width: 8px; height: 10px; margin-right: 3px; vertical-align: top; }
.hover { background: #e4f3fe; }
.status { display: flex; justify-content: space-between; align-items: center; height: 13px; padding: 0 3px 0 8px; color: #3f5878; }
.views { display: flex; }
.views svg { width: 13px; height: 13px; }

/* Floating windows */
.window { position: absolute; border: 1px solid #a9d88a; background: #f0f0f0; box-shadow: 0 2px 8px rgba(0, 0, 0, .35); font-size: 6px; line-height: 8px; color: #111; }
.window header { display: flex; align-items: center; background: #fff; font-size: 7px; }
.window h3 { flex: 1; }
.x { display: grid; place-items: center; width: 19px; height: 14px; color: #555; }
.window label { display: block; }
.pick { display: flex; position: relative; }
.pick select { appearance: none; width: 100%; height: 13px; padding: 0 2px; background: #e1e1e1; border: 1px solid #b9b9b9; outline: 0; }
.pick svg { position: absolute; right: 1px; top: 3px; color: #777; }
.text { display: block; width: 100%; height: 13px; padding: 0 2px; background: #fff; border: 1px solid #8f8f8f; outline: 0; }
.btn { height: 13px; background: #e1e1e1; border: 1px solid #c0c0c0; text-align: center; }
fieldset { margin: 0; padding: 0; min-width: 0; border: 1px solid #dedede; }
legend { padding: 0 2px; }
.progress { background: #e4e6e5; border: 1px solid #cccecd; }

.format { left: 336px; top: 107px; width: 138px; }
.format header { height: 17px; padding-left: 4px; }
.format .body { padding: 6px 5px 17px; }
.format label { margin-bottom: 2px; }
.format .pick { margin-bottom: 4px; }
.restore { display: block; width: 74px; margin: 12px 0; }
.format fieldset { height: 37px; margin-top: 5px; padding: 4px 3px; }
.format .check { display: flex; align-items: center; gap: 2px; }
.check input { appearance: none; width: 8px; height: 8px; border: 1px solid #555; background: #fff; display: grid; place-items: center; }
.check input:checked::after { content: ""; width: 5px; height: 3px; border: solid #333; border-width: 0 0 1px 1px; transform: rotate(-45deg); }
.format .progress { height: 8px; margin-top: 8px; }
.actions { display: flex; justify-content: flex-end; gap: 4px; margin-top: 16px; }
.actions .btn { width: 41px; }
.actions .primary { border: 1px solid #1b7fd4; }

.sdcard { left: 555px; top: 109px; width: 229px; }
.sdcard header { height: 15px; padding-left: 2px; gap: 3px; }
.card { width: 8px; height: 10px; }
.menu { display: flex; gap: 8px; height: 11px; padding-left: 4px; background: #fff; font-size: 7px; }
.sdcard .body { padding: 5px 3px 4px 4px; display: flex; flex-direction: column; }
.sdcard fieldset { padding: 0 4px 2px 3px; margin-bottom: 5px; }
.f-select { display: flex; flex-direction: column; height: 42px; }
.f-select .pick { margin: 2px 0 1px; }
.f-select .btn { display: block; width: 52px; margin-left: auto; }
.f-info { display: flex; justify-content: space-between; align-items: center; height: 37px; }
.f-info dl { display: grid; grid-template-columns: 70px 60px; row-gap: 6px; }
.logo { width: 28px; height: 18px; margin-right: 2px; }
.f-opt { height: 66px; }
.sdcard .radio { display: flex; align-items: center; gap: 2px; margin: 1px 0 7px; }
.sdcard .radio + .radio { margin-bottom: 5px; }
.sdcard label + .text { margin-top: 1px; }
.radio input { appearance: none; width: 8px; height: 8px; border: 1px solid #444; border-radius: 50%; background: #fff; }
.radio input:checked { background: radial-gradient(circle, #222 2px, #fff 3px); }
.sdcard .progress { height: 14px; }
.go { width: 43px; margin: 3px 0; align-self: flex-end; }
.sdcard p { text-align: right; padding-right: 4px; }

/* Taskbar */
.taskbar { position: relative; height: 24px; display: flex; align-items: stretch; background: #04160f; border-top: 1px solid #59655f; color: #fff; overflow: hidden; }
.pcb { position: absolute; inset: 0; width: 100%; height: 100%; }
.silk { fill: #2b3331; font: 13px "Liberation Sans", sans-serif; }
.launch { position: relative; display: flex; }
.launch button { position: relative; display: grid; place-items: center; }
.launch svg { width: 14px; height: 14px; }
.start button { width: 28px; }
.start { margin-right: 2px; }
.apps button { width: 29px; }
.apps .open::after { content: ""; position: absolute; left: 3px; right: 3px; bottom: 0; height: 2px; background: #8fd96b; }
.apps .active { background: #3b4c43; }
.apps .active::after { left: 0; right: 0; }
.badge { position: absolute; right: 3px; bottom: 3px; width: 8px; height: 8px; border-radius: 50%; background: #333b38; border: 1px solid #888; font-size: 6px; line-height: 6px; text-align: center; color: #fff; }
.tray { position: relative; margin-left: auto; display: flex; align-items: center; gap: 4px; padding-right: 9px; border-right: 1px solid #4d5a55; margin-right: 2px; }
.t10 { width: 10px; height: 10px; }
.t14 { width: 12px; height: 12px; }
.gap { margin-left: 6px; }
.lang { margin-left: 3px; }
.tray time { text-align: center; margin: 0 3px; line-height: 11px; }
.notif { position: relative; margin-left: 2px; }
.notif .badge { right: -4px; bottom: -2px; }
```
